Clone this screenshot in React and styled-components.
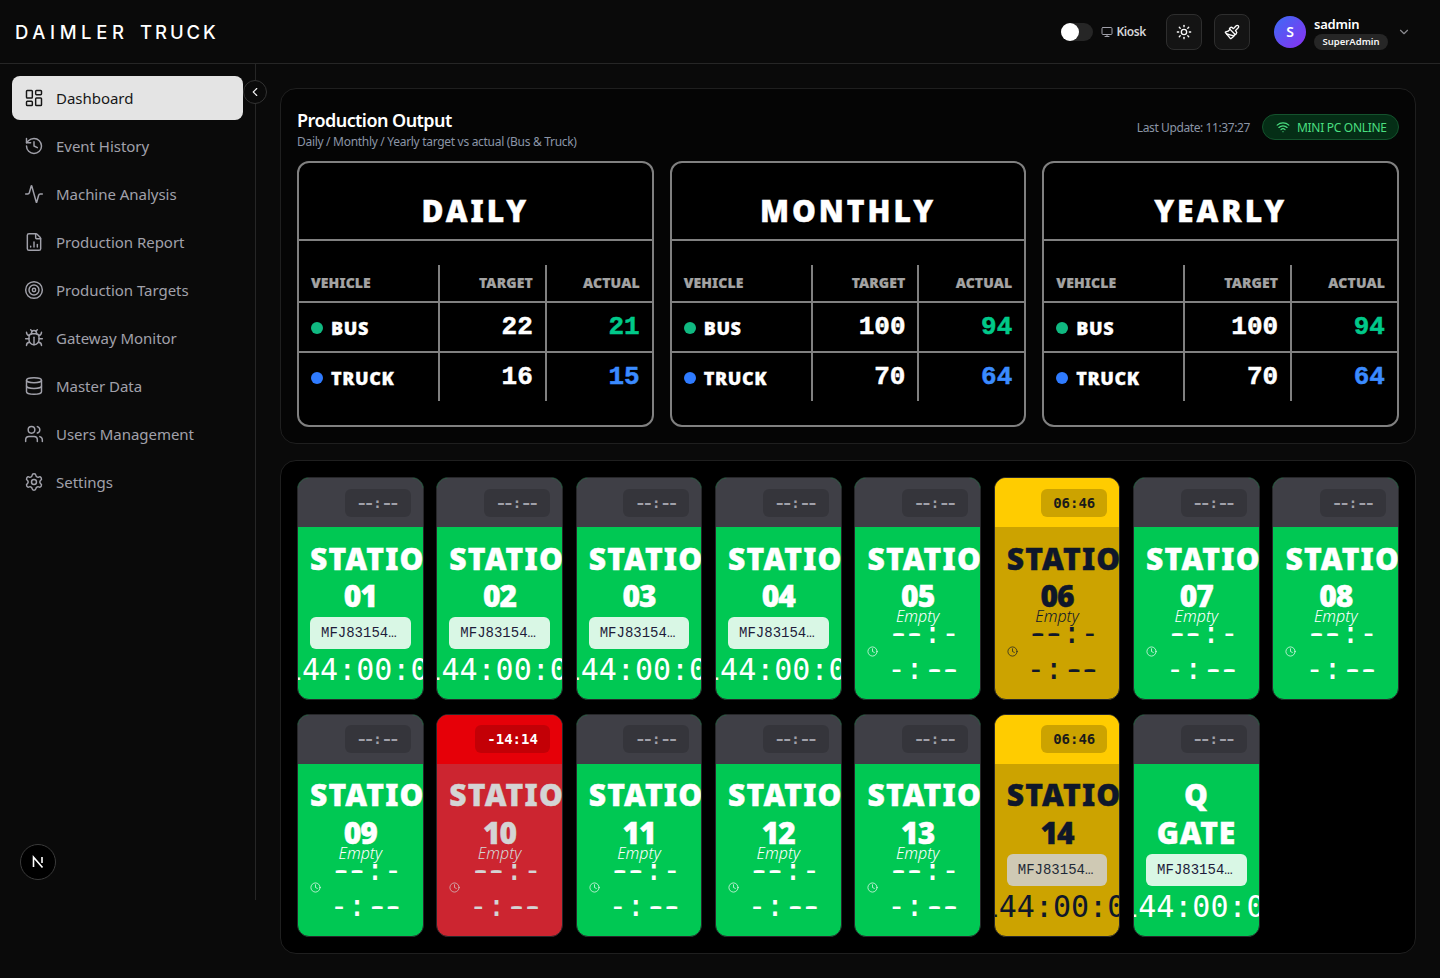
import React from "react";
import styled, { createGlobalStyle } from "styled-components";
import {
  LayoutDashboard, History, Activity, FileChartColumn, Target, Bug, Database, Users, Settings,
  ChevronLeft, ChevronDown, Monitor, Sun, Paintbrush, Wifi, Clock,
} from "lucide-react";

const SANS = `"Noto Sans", "Open Sans", sans-serif`;
const MONO = `"DejaVu Sans Mono", "Liberation Mono", monospace`;
const LIBMONO = `"Liberation Mono", monospace`;

const Global = createGlobalStyle`
  * { box-sizing: border-box; }
  html, body { margin: 0; background: #0a0a0a; }
  body { font-family: ${SANS}; color: #fff; }
`;

const Page = styled.div`
  width: 1440px;
  height: 978px;
  display: flex;
  flex-direction: column;
  background: #0a0a0a;
  overflow: hidden;
`;

const TopBar = styled.header`
  height: 64px;
  flex: none;
  display: flex;
  align-items: center;
  padding: 0 29px 0 15px;
  border-bottom: 1px solid #262626;
`;

const Logo = styled.div`
  font-family: "Inter", sans-serif;
  font-size: 18.5px;
  font-weight: 500;
  letter-spacing: 4.6px;
  word-spacing: 2px;
  white-space: nowrap;
  margin-right: auto;
`;

const LogoWord = styled.span`
  letter-spacing: 2.9px;
`;

const Toggle = styled.div`
  width: 32px;
  height: 18px;
  border-radius: 9px;
  background: #262626;
  margin-right: 8px;
  &::before {
    content: "";
    display: block;
    width: 18px;
    height: 18px;
    border-radius: 50%;
    background: #fff;
  }
`;

const KioskLabel = styled.div`
  display: flex;
  align-items: center;
  gap: 3px;
  font-size: 12px;
  font-weight: 600;
  color: #d4d4d8;
  margin-right: 20px;
  letter-spacing: -0.4px;
  svg { color: #a1a1aa; }
`;

const IconButton = styled.div`
  width: 36px;
  height: 36px;
  display: grid;
  place-items: center;
  background: #141414;
  border: 1px solid #2e2e2e;
  border-radius: 8px;
  margin-right: 12px;
  color: #fafafa;
`;

const Avatar = styled.div`
  width: 32px;
  height: 32px;
  margin-left: 12px;
  border-radius: 50%;
  display: grid;
  place-items: center;
  background: linear-gradient(135deg, #3b6cf6, #8b2ff0);
  font-size: 14px;
  font-weight: 600;
`;

const UserBlock = styled.div`
  margin: 3px 0 0 8px;
  display: flex;
  flex-direction: column;
  align-items: flex-start;
`;

const UserName = styled.div`
  font-size: 13px;
  font-weight: 600;
  line-height: 16px;
  letter-spacing: -0.2px;
`;

const RoleBadge = styled.div`
  width: 74px;
  height: 16px;
  margin-top: 2.5px;
  border-radius: 8px;
  background: #262626;
  font-size: 9.5px;
  font-weight: 600;
  line-height: 16px;
  text-align: center;
  color: #f4f4f5;
`;

const Caret = styled(ChevronDown)`
  margin-left: 9px;
  color: #8a8a8f;
`;

const Body = styled.div`
  flex: 1;
  display: flex;
  min-height: 0;
  align-items: flex-start;
`;

const Sidebar = styled.aside`
  position: relative;
  width: 256px;
  height: 836px;
  flex: none;
  border-right: 1px solid #262626;
  padding: 12px 12px 20px;
  display: flex;
  flex-direction: column;
  gap: 4px;
`;

const NavItem = styled.div`
  width: 231px;
  height: 44px;
  flex: none;
  display: flex;
  align-items: center;
  gap: 12px;
  padding-left: 12px;
  border-radius: 8px;
  font-size: 15px;
  letter-spacing: -0.03px;
  background: ${(p) => (p.$active ? "#e4e4e4" : "transparent")};
  color: ${(p) => (p.$active ? "#171717" : "#a1a1aa")};
`;

const CollapseButton = styled.div`
  position: absolute;
  top: 16px;
  right: -12px;
  width: 24px;
  height: 24px;
  border-radius: 50%;
  border: 1px solid #333;
  background: #0a0a0a;
  display: grid;
  place-items: center;
  color: #f4f4f5;
`;

const DevBadge = styled.div`
  margin-top: auto;
  margin-left: 8px;
  width: 36px;
  height: 36px;
  flex: none;
  border-radius: 50%;
  background: #000;
  border: 1px solid #3a3a3a;
  display: grid;
  place-items: center;
`;

const Main = styled.main`
  flex: 1;
  min-width: 0;
  padding: 24px;
  display: flex;
  flex-direction: column;
  gap: 16px;
`;

const Panel = styled.section`
  background: ${(p) => p.$bg};
  border: 1px solid #1f1f1f;
  border-radius: 16px;
  padding: 16px;
`;

const PanelHead = styled.div`
  display: flex;
  align-items: center;
  height: 56px;
`;

const HeadText = styled.div`
  margin-right: auto;
  margin-top: -11px;
`;

const PanelTitle = styled.h2`
  margin: 0;
  font-size: 18px;
  font-weight: 600;
  line-height: 28px;
  letter-spacing: -0.55px;
`;

const PanelSub = styled.div`
  font-size: 12px;
  line-height: 16px;
  letter-spacing: -0.3px;
  color: #8b95a7;
`;

const LastUpdate = styled.div`
  font-size: 12px;
  letter-spacing: -0.4px;
  color: #8b95a7;
  margin: -12px 12px 0 0;
`;

const OnlineBadge = styled.div`
  width: 137px;
  height: 26px;
  margin-top: -12px;
  display: flex;
  align-items: center;
  gap: 7px;
  padding-left: 13px;
  border: 1px solid #14532d;
  border-radius: 13px;
  background: #052e16;
  color: #4ade80;
  font-size: 12px;
  letter-spacing: -0.3px;
`;

const TableRow = styled.div`
  display: grid;
  grid-template-columns: repeat(3, 1fr);
  gap: 16px;
`;

const OutputCard = styled.div`
  height: 266px;
  background: #000;
  border: 2px solid #808080;
  border-radius: 12px;
`;

const OutputTitle = styled.div`
  height: 78px;
  padding-top: 18px;
  display: grid;
  place-items: center;
  border-bottom: 2px solid #808080;
  font-size: 30px;
  font-weight: 900;
  letter-spacing: 3px;
  -webkit-text-stroke: 0.4px #fff;
`;

const OutputGrid = styled.div`
  margin-top: 24px;
  display: grid;
  grid-template-columns: 139px 1fr 1fr;
  grid-template-rows: 38px 50px 48px;
`;

const Cell = styled.div`
  display: flex;
  align-items: center;
  justify-content: ${(p) => (p.$right ? "flex-end" : "flex-start")};
  padding: 0 12px;
  border-left: ${(p) => (p.$first ? "none" : "2px solid #808080")};
  border-bottom: ${(p) => (p.$last ? "none" : "2px solid #808080")};
`;

const HeadCell = styled(Cell)`
  padding-bottom: 2px;
  font-size: 14px;
  font-weight: 900;
  color: #a3a3a3;
  letter-spacing: 0.1px;
  -webkit-text-stroke: 0.2px #a3a3a3;
`;

const VehicleCell = styled(Cell)`
  padding-top: 2px;
`;

const Dot = styled.span`
  width: 12px;
  height: 12px;
  border-radius: 50%;
  margin-right: 8px;
  background: ${(p) => p.$color};
`;

const VehicleName = styled.span`
  font-size: 18px;
  font-weight: 900;
  letter-spacing: 0.6px;
  -webkit-text-stroke: 0.3px #fff;
`;

const Value = styled.span`
  font-family: ${LIBMONO};
  font-size: 26px;
  font-weight: 700;
  color: ${(p) => p.$color};
  -webkit-text-stroke: 0.5px ${(p) => p.$color};
`;

const StationGrid = styled.div`
  display: grid;
  grid-template-columns: repeat(8, 1fr);
  column-gap: 12.8px;
  row-gap: 13.5px;
  grid-auto-rows: 223px;
`;

const TONES = {
  ok: { body: "#00c853", head: "#3f3f46", text: "#fff", chip: "#d9f7e5", chipText: "#1e1b3a", badge: "rgba(0,0,0,.15)", badgeText: "#a1a1aa" },
  warn: { body: "#cca300", head: "#ffcc00", text: "#0f172a", chip: "#cfc9b4", chipText: "#1f2937", badge: "rgba(0,0,0,.2)", badgeText: "#1a1a1a" },
  alert: { body: "#cc2530", head: "#e60008", text: "#d4d4d4", chip: "#eee", chipText: "#111", badge: "rgba(0,0,0,.15)", badgeText: "#fff" },
};

const Station = styled.div`
  border: 1px solid #27272a;
  border-radius: 12px;
  overflow: hidden;
  display: flex;
  flex-direction: column;
  background: ${(p) => TONES[p.$tone].body};
  color: ${(p) => TONES[p.$tone].text};
`;

const StationHead = styled.div`
  height: 49px;
  flex: none;
  display: flex;
  align-items: center;
  justify-content: flex-end;
  padding: 0 12px 0 0;
  background: ${(p) => TONES[p.$tone].head};
`;

const TimeBadge = styled.div`
  min-width: 66px;
  height: 28px;
  padding: 0 12px;
  border-radius: 6px;
  display: flex;
  align-items: center;
  justify-content: center;
  font-family: ${MONO};
  font-size: 14px;
  font-weight: 700;
  background: ${(p) => TONES[p.$tone].badge};
  color: ${(p) => TONES[p.$tone].badgeText};
`;

const StationBody = styled.div`
  flex: 1;
  min-height: 0;
  padding: 12.5px 12px 0;
  text-align: center;
`;

const StationTitle = styled.div`
  font-size: 30px;
  font-weight: 900;
  line-height: 37.5px;
  -webkit-text-stroke: 0.4px currentColor;
`;

const TitleWord = styled.span`
  letter-spacing: ${(p) => (p.$numeric ? "-1px" : p.$long ? "1.2px" : "0.8px")};
`;

const Chip = styled.div`
  height: 32px;
  margin-top: 2.5px;
  padding: 0 11px;
  border-radius: 6px;
  line-height: 32px;
  text-align: left;
  font-family: ${LIBMONO};
  font-size: 14px;
  white-space: nowrap;
  overflow: hidden;
  text-overflow: ellipsis;
  background: ${(p) => TONES[p.$tone].chip};
  color: ${(p) => TONES[p.$tone].chipText};
`;

const BigTimer = styled.div`
  margin: 0 0 0 -26px;
  height: 42px;
  font-family: ${MONO};
  font-size: 30px;
  line-height: 42px;
  text-align: left;
  white-space: nowrap;
`;

const EmptyLabel = styled.div`
  margin: -6.5px 0 -9px;
  font-size: 16px;
  font-style: italic;
  font-weight: 300;
  line-height: 16px;
`;

const EmptyTimer = styled.div`
  display: flex;
  align-items: center;
  gap: 9px;
`;

const EmptyDigits = styled.div`
  flex: 1;
  min-width: 0;
  font-family: ${MONO};
  font-size: 30px;
  line-height: 36px;
  text-align: left;
`;

/* two hyphens read as one joined stroke, as in the reference's coding font */
const JoinedDashes = styled.span`
  display: inline-block;
  width: 1.2em;
  text-align: center;
  letter-spacing: -0.07em;
  text-shadow: 0.05em 0 currentColor, -0.05em 0 currentColor;
`;

const DigitLine = styled.div`
  white-space: nowrap;
`;

const TABLES = [
  { title: "DAILY", v: [22, 21, 16, 15] },
  { title: "MONTHLY", v: [100, 94, 70, 64] },
  { title: "YEARLY", v: [100, 94, 70, 64] },
];

const NAV = [
  [LayoutDashboard, "Dashboard"],
  [History, "Event History"],
  [Activity, "Machine Analysis"],
  [FileChartColumn, "Production Report"],
  [Target, "Production Targets"],
  [Bug, "Gateway Monitor"],
  [Database, "Master Data"],
  [Users, "Users Management"],
  [Settings, "Settings"],
];

const STATIONS = [
  { name: "STATION 01", tone: "ok", part: true },
  { name: "STATION 02", tone: "ok", part: true },
  { name: "STATION 03", tone: "ok", part: true },
  { name: "STATION 04", tone: "ok", part: true },
  { name: "STATION 05", tone: "ok" },
  { name: "STATION 06", tone: "warn", time: "06:46" },
  { name: "STATION 07", tone: "ok" },
  { name: "STATION 08", tone: "ok" },
  { name: "STATION 09", tone: "ok" },
  { name: "STATION 10", tone: "alert", time: "-14:14" },
  { name: "STATION 11", tone: "ok" },
  { name: "STATION 12", tone: "ok" },
  { name: "STATION 13", tone: "ok" },
  { name: "STATION 14", tone: "warn", time: "06:46", part: true },
  { name: "Q GATE", tone: "ok", part: true },
];

function OutputTable({ title, v }) {
  return (
    <OutputCard>
      <OutputTitle>{title}</OutputTitle>
      <OutputGrid>
        <HeadCell $first>VEHICLE</HeadCell>
        <HeadCell $right>TARGET</HeadCell>
        <HeadCell $right>ACTUAL</HeadCell>
        <VehicleCell $first><Dot $color="#10b981" /><VehicleName>BUS</VehicleName></VehicleCell>
        <Cell $right><Value $color="#fff">{v[0]}</Value></Cell>
        <Cell $right><Value $color="#00c98a">{v[1]}</Value></Cell>
        <VehicleCell $first $last><Dot $color="#2f7bff" /><VehicleName>TRUCK</VehicleName></VehicleCell>
        <Cell $right $last><Value $color="#fff">{v[2]}</Value></Cell>
        <Cell $right $last><Value $color="#3b8bff">{v[3]}</Value></Cell>
      </OutputGrid>
    </OutputCard>
  );
}

function StationCard({ name, tone, time, part }) {
  const words = name.split(" ");
  return (
    <Station $tone={tone}>
      <StationHead $tone={tone}>
        <TimeBadge $tone={tone}>
          {time || <><JoinedDashes>--</JoinedDashes>:<JoinedDashes>--</JoinedDashes></>}
        </TimeBadge>
      </StationHead>
      <StationBody>
        <StationTitle>
          {words.map((w, i) => (
            <React.Fragment key={w}>
              {i > 0 && " "}
              <TitleWord $numeric={/^\d+$/.test(w)} $long={w.length > 4}>{w}</TitleWord>
            </React.Fragment>
          ))}
        </StationTitle>
        {part ? (
          <>
            <Chip $tone={tone}>MFJ83154000123456</Chip>
            <BigTimer>144:00:00</BigTimer>
          </>
        ) : (
          <>
            <EmptyLabel>Empty</EmptyLabel>
            <EmptyTimer>
              <Clock size={11} strokeWidth={1.5} />
              <EmptyDigits>
                <DigitLine><JoinedDashes>--</JoinedDashes>:-</DigitLine>
                <DigitLine>-:<JoinedDashes>--</JoinedDashes></DigitLine>
              </EmptyDigits>
            </EmptyTimer>
          </>
        )}
      </StationBody>
    </Station>
  );
}

export default function App() {
  return (
    <Page>
      <Global />
      <TopBar>
        <Logo>DAIMLER <LogoWord>TRUCK</LogoWord></Logo>
        <Toggle />
        <KioskLabel><Monitor size={12} />Kiosk</KioskLabel>
        <IconButton><Sun size={16} /></IconButton>
        <IconButton><Paintbrush size={16} /></IconButton>
        <Avatar>S</Avatar>
        <UserBlock>
          <UserName>sadmin</UserName>
          <RoleBadge>SuperAdmin</RoleBadge>
        </UserBlock>
        <Caret size={14} />
      </TopBar>
      <Body>
        <Sidebar>
          {NAV.map(([Icon, label], i) => (
            <NavItem key={label} $active={i === 0}>
              <Icon size={20} strokeWidth={1.75} />
              {label}
            </NavItem>
          ))}
          <CollapseButton><ChevronLeft size={14} /></CollapseButton>
          <DevBadge>
            <svg width="14" height="14" viewBox="0 0 14 14" fill="none" stroke="#fff" strokeWidth="1.6">
              <path d="M2.5 12V2.2L11.5 12.6" />
              <path d="M11 2v6" />
            </svg>
          </DevBadge>
        </Sidebar>
        <Main>
          <Panel $bg="#050505">
            <PanelHead>
              <HeadText>
                <PanelTitle>Production Output</PanelTitle>
                <PanelSub>Daily / Monthly / Yearly target vs actual (Bus &amp; Truck)</PanelSub>
              </HeadText>
              <LastUpdate>Last Update: 11:37:27</LastUpdate>
              <OnlineBadge><Wifi size={14} />MINI PC ONLINE</OnlineBadge>
            </PanelHead>
            <TableRow>
              {TABLES.map((t) => <OutputTable key={t.title} {...t} />)}
            </TableRow>
          </Panel>
          <Panel $bg="#000">
            <StationGrid>
              {STATIONS.map((s) => <StationCard key={s.name} {...s} />)}
            </StationGrid>
          </Panel>
        </Main>
      </Body>
    </Page>
  );
}
